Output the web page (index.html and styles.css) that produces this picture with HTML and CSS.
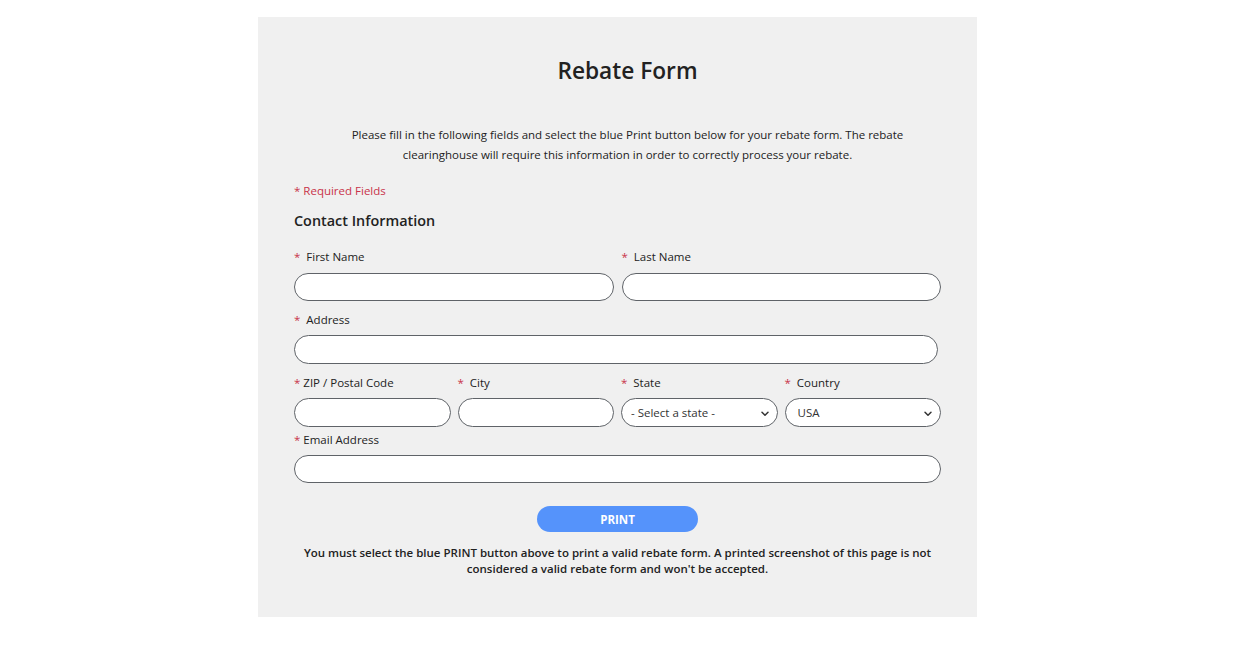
FILE: index.html
```html
<!DOCTYPE html>
<html lang="en">
<head>
<meta charset="utf-8">
<title>Rebate Form</title>
<link rel="stylesheet" href="styles.css">
</head>
<body>
<main class="card">
  <h1 class="title">Rebate Form</h1>
  <p class="intro">Please fill in the following fields and select the blue Print button below for your rebate form. The rebate clearinghouse will require this information in order to correctly process your rebate.</p>
  <p class="required-note">* Required Fields</p>
  <h2 class="section-title">Contact Information</h2>

  <div class="row row-2 row-first">
    <div class="field">
      <label class="label"><span class="req">*</span>&nbsp; First Name</label>
      <input class="input" type="text">
    </div>
    <div class="field">
      <label class="label"><span class="req">*</span>&nbsp; Last Name</label>
      <input class="input" type="text">
    </div>
  </div>

  <div class="row row-address">
    <div class="field">
      <label class="label"><span class="req">*</span>&nbsp; Address</label>
      <input class="input input-address" type="text">
    </div>
  </div>

  <div class="row row-4 row-third">
    <div class="field">
      <label class="label"><span class="req">*</span> ZIP / Postal Code</label>
      <input class="input input-tall" type="text">
    </div>
    <div class="field">
      <label class="label"><span class="req">*</span>&nbsp; City</label>
      <input class="input input-tall" type="text">
    </div>
    <div class="field">
      <label class="label"><span class="req">*</span>&nbsp; State</label>
      <div class="select-wrap">
        <select class="input input-tall select">
          <option>- Select a state -</option>
        </select>
        <svg class="chevron" width="10" height="6" viewBox="0 0 10 6"><path d="M2 1.3 L5 4.3 L8 1.3" fill="none" stroke="#333" stroke-width="1.5" stroke-linecap="round" stroke-linejoin="round"/></svg>
      </div>
    </div>
    <div class="field">
      <label class="label"><span class="req">*</span>&nbsp; Country</label>
      <div class="select-wrap">
        <select class="input input-tall select select-country">
          <option>USA</option>
        </select>
        <svg class="chevron" width="10" height="6" viewBox="0 0 10 6"><path d="M2 1.3 L5 4.3 L8 1.3" fill="none" stroke="#333" stroke-width="1.5" stroke-linecap="round" stroke-linejoin="round"/></svg>
      </div>
    </div>
  </div>

  <div class="row row-email">
    <div class="field">
      <label class="label"><span class="req">*</span> Email Address</label>
      <input class="input" type="text">
    </div>
  </div>

  <div class="actions">
    <button class="print-btn" type="button">PRINT</button>
  </div>
  <p class="warning">You must select the blue PRINT button above to print a valid rebate form. A printed screenshot of this page is not considered a valid rebate form and won't be accepted.</p>
</main>
</body>
</html>
```

FILE: styles.css
```css
* { box-sizing: border-box; }

html, body {
  margin: 0;
  padding: 0;
  background: #ffffff;
}

body {
  font-family: "Open Sans", "Noto Sans", "Liberation Sans", sans-serif;
  color: #222222;
  padding-right: 1px;
}

.card {
  width: 719px;
  height: 600px;
  margin: 17px auto 0;
  background: #f0f0f0;
  padding: 37px 36px 0;
}

.title {
  margin: 0;
  font-size: 22.7px;
  line-height: 34px;
  font-weight: 600;
  text-align: center;
  padding-left: 20px;
  color: #222;
}

.intro {
  margin: 37px 0 0;
  padding: 0 20px 0 40px;
  font-size: 11.5px;
  line-height: 20px;
  text-align: center;
  color: #222;
}

.required-note {
  margin: 18px 0 0;
  font-size: 11.5px;
  line-height: 16px;
  color: #c8334a;
}

.section-title {
  margin: 12px 0 0;
  font-size: 14.4px;
  line-height: 20px;
  font-weight: 600;
  color: #222;
}

.row {
  display: grid;
  grid-template-columns: 1fr;
}

.row-2 {
  grid-template-columns: 1fr 1fr;
  column-gap: 8px;
}

.row-4 {
  grid-template-columns: repeat(4, 1fr);
  column-gap: 7px;
}

.row-first { margin-top: 18px; }
.row-address { margin-top: 11px; }
.row-third { margin-top: 11px; }
.row-email { margin-top: 5px; }

.field {
  display: flex;
  flex-direction: column;
  min-width: 0;
}

.label {
  font-size: 11.5px;
  line-height: 16px;
  color: #222;
  margin-bottom: 8px;
  white-space: nowrap;
}

.row-address .label,
.row-third .label,
.row-email .label {
  margin-bottom: 7px;
}

.req {
  color: #c8334a;
}

.input {
  display: block;
  width: 100%;
  height: 28px;
  border: 1px solid #5f6368;
  border-radius: 15px;
  background: #ffffff;
  font-family: inherit;
  font-size: 11.5px;
  color: #222;
  padding: 0 12px;
  outline: none;
  margin: 0;
}

.input-address {
  width: calc(100% - 3px);
  height: 29px;
}

.input-tall {
  height: 29px;
}

.select-wrap {
  position: relative;
}

.select {
  appearance: none;
  -webkit-appearance: none;
  padding: 0 24px 0 9px;
  color: #333;
}

.select-country {
  padding-left: 12px;
}

.chevron {
  position: absolute;
  right: 8px;
  top: 13px;
  pointer-events: none;
}

.actions {
  display: flex;
  justify-content: center;
  margin-top: 23px;
}

.print-btn {
  width: 161px;
  height: 26px;
  border: none;
  border-radius: 13px;
  background: #5593fb;
  color: #ffffff;
  font-family: inherit;
  font-size: 11.5px;
  font-weight: 700;
  padding: 0;
  cursor: pointer;
}

.warning {
  margin: 13px 0 0;
  font-size: 11.5px;
  line-height: 16px;
  font-weight: 600;
  text-align: center;
  color: #222;
}
```
